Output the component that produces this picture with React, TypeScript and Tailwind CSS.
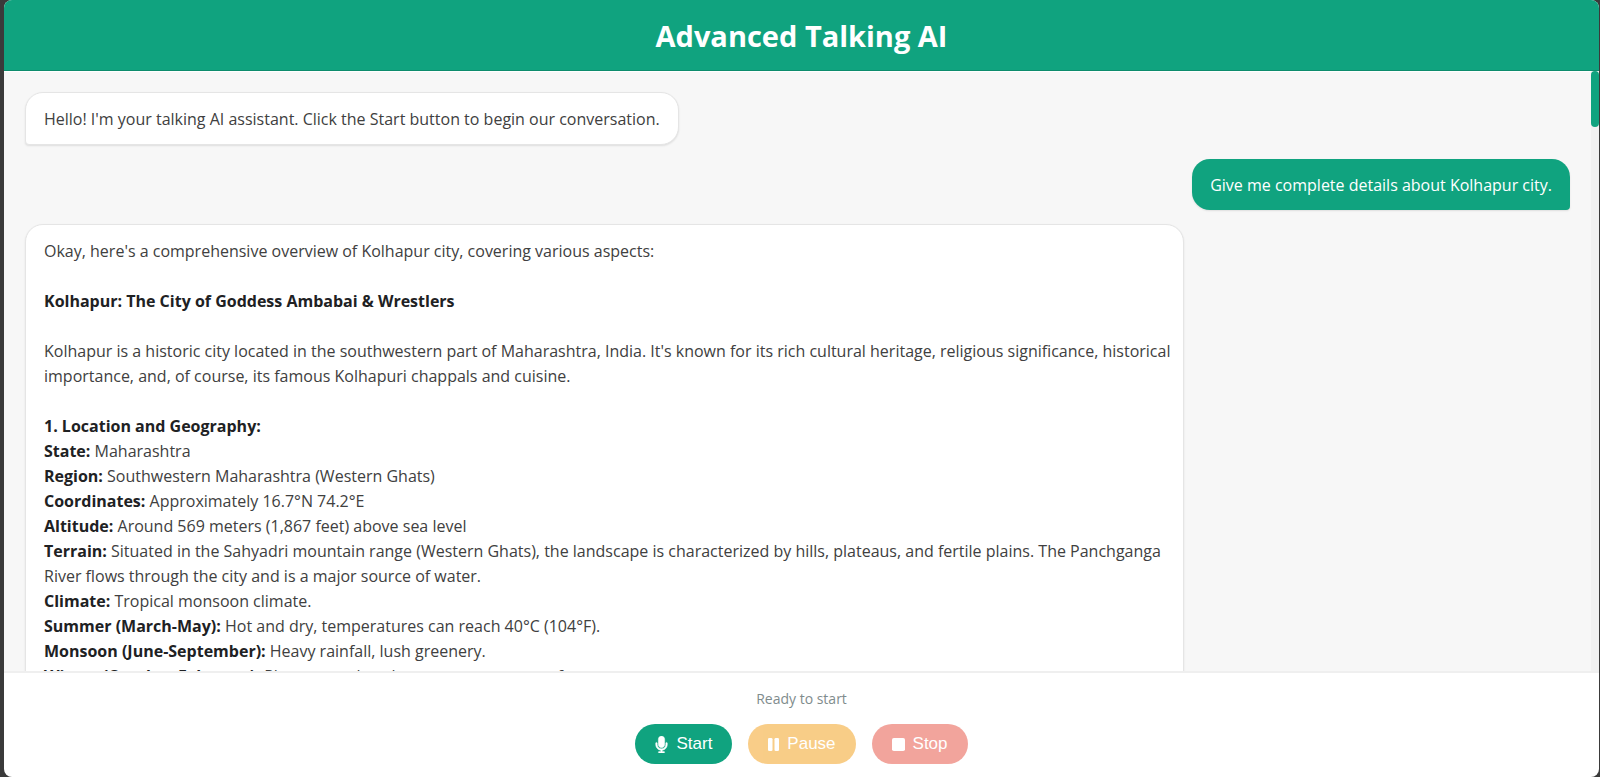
import type { ReactNode } from 'react';
import clsx from 'clsx';

interface Fact {
  label: string;
  text: string;
}

const facts: Fact[] = [
  { label: 'State:', text: 'Maharashtra' },
  { label: 'Region:', text: 'Southwestern Maharashtra (Western Ghats)' },
  { label: 'Coordinates:', text: 'Approximately 16.7°N 74.2°E' },
  { label: 'Altitude:', text: 'Around 569 meters (1,867 feet) above sea level' },
  {
    label: 'Terrain:',
    text: 'Situated in the Sahyadri mountain range (Western Ghats), the landscape is characterized by hills, plateaus, and fertile plains. The Panchganga River flows through the city and is a major source of water.',
  },
  { label: 'Climate:', text: 'Tropical monsoon climate.' },
  { label: 'Summer (March-May):', text: 'Hot and dry, temperatures can reach 40°C (104°F).' },
  { label: 'Monsoon (June-September):', text: 'Heavy rainfall, lush greenery.' },
  { label: 'Winter (October-February):', text: 'Pleasant and cool, temperatures range from' },
];

function MicIcon() {
  return (
    <svg viewBox="0 0 384 512" fill="currentColor" className="h-[17px] w-[13px]" aria-hidden="true">
      <path
        stroke="currentColor"
        strokeWidth="12"
        d="M192 0C139 0 96 43 96 96V256c0 53 43 96 96 96s96-43 96-96V96c0-53-43-96-96-96zM64 216c0-13.3-10.7-24-24-24s-24 10.7-24 24v40c0 89.1 66.2 162.7 152 174.4V464H120c-13.3 0-24 10.7-24 24s10.7 24 24 24h144c13.3 0 24-10.7 24-24s-10.7-24-24-24H216V430.4c85.8-11.7 152-85.3 152-174.4V216c0-13.3-10.7-24-24-24s-24 10.7-24 24v40c0 70.7-57.3 128-128 128s-128-57.3-128-128V216z"
      />
    </svg>
  );
}

function PauseIcon() {
  return (
    <svg viewBox="0 0 11 17" fill="currentColor" className="h-[17px] w-[11px]" aria-hidden="true">
      <rect x="0" y="2" width="4.5" height="13" rx="1.3" />
      <rect x="6.5" y="2" width="4.5" height="13" rx="1.3" />
    </svg>
  );
}

function StopIcon() {
  return (
    <svg viewBox="0 0 13 17" fill="currentColor" className="h-[17px] w-[13px]" aria-hidden="true">
      <rect x="0" y="2" width="13" height="13" rx="1.8" />
    </svg>
  );
}

interface MessageProps {
  from: 'ai' | 'user';
  children: ReactNode;
}

function Message({ from, children }: MessageProps) {
  return (
    <div
      className={clsx(
        'max-w-[75%] rounded-[18px] px-[18px] pt-[14px] pb-3 shadow-[0_1px_2px_rgba(0,0,0,0.1)]',
        from === 'ai' && 'self-start rounded-bl-sm border border-[#e5e5e5] bg-white text-[#404040]',
        from === 'user' && 'self-end rounded-br-sm bg-[#10a37f] text-white'
      )}
    >
      {children}
    </div>
  );
}

export default function App() {
  return (
    <div className="h-screen bg-[#3a3a3a] pl-1 pr-px font-['Open_Sans',sans-serif]">
      <div className="flex h-full flex-col overflow-hidden rounded-lg bg-white">
        <header className="border-b border-[#0d8c6d] bg-[#10a37f] pt-[17px] pb-[15px] text-center">
          <h1 className="text-[29px] leading-[38px] font-bold text-white">Advanced Talking AI</h1>
        </header>

        {/* Conversation */}
        <main className="flex min-h-0 flex-1 bg-[#f7f7f7]">
          <div className="flex min-w-0 flex-1 flex-col gap-[14px] overflow-y-auto border-t border-white px-[21px] pt-5 text-base leading-[25px] [scrollbar-width:none] *:shrink-0">
            <Message from="ai">
              <p>Hello! I'm your talking AI assistant. Click the Start button to begin our conversation.</p>
            </Message>
            <Message from="user">
              <p>Give me complete details about Kolhapur city.</p>
            </Message>
            <Message from="ai">
              <p className="mb-[25px]">Okay, here's a comprehensive overview of Kolhapur city, covering various aspects:</p>
              <h2 className="mb-[25px] font-bold text-[#202123]">Kolhapur: The City of Goddess Ambabai &amp; Wrestlers</h2>
              <p className="-mr-3 mb-[25px]">
                Kolhapur is a historic city located in the southwestern part of Maharashtra, India. It's known for its
                rich cultural heritage, religious significance, historical importance, and, of course, its famous
                Kolhapuri chappals and cuisine.
              </p>
              <h3 className="font-bold text-[#202123]">1. Location and Geography:</h3>
              {facts.map((fact) => (
                <p key={fact.label}>
                  <strong className="font-bold text-[#202123]">{fact.label}</strong> {fact.text}
                </p>
              ))}
            </Message>
          </div>

          {/* Scroll track */}
          <div className="w-2 bg-[#f1f1f1]">
            <div className="h-14 rounded-full bg-[#10a37f]" />
          </div>
        </main>

        {/* Controls */}
        <footer className="flex flex-col items-center gap-[14px] border-t-2 border-[#efefef] px-4 pt-[15px] pb-[13px]">
          <p className="text-sm leading-[22px] text-[#7f8c8d]">Ready to start</p>
          <div className="flex gap-4 font-['Liberation_Sans',sans-serif] text-[17px] text-white">
            <button className="flex h-10 items-center gap-2 rounded-full bg-[#10a37f] px-5">
              <MicIcon />
              Start
            </button>
            <button disabled className="flex h-10 items-center gap-2 rounded-full bg-[#f39c12] px-5 opacity-50">
              <PauseIcon />
              Pause
            </button>
            <button disabled className="flex h-10 items-center gap-2 rounded-full bg-[#e74c3c] px-5 opacity-50">
              <StopIcon />
              Stop
            </button>
          </div>
        </footer>
      </div>
    </div>
  );
}
